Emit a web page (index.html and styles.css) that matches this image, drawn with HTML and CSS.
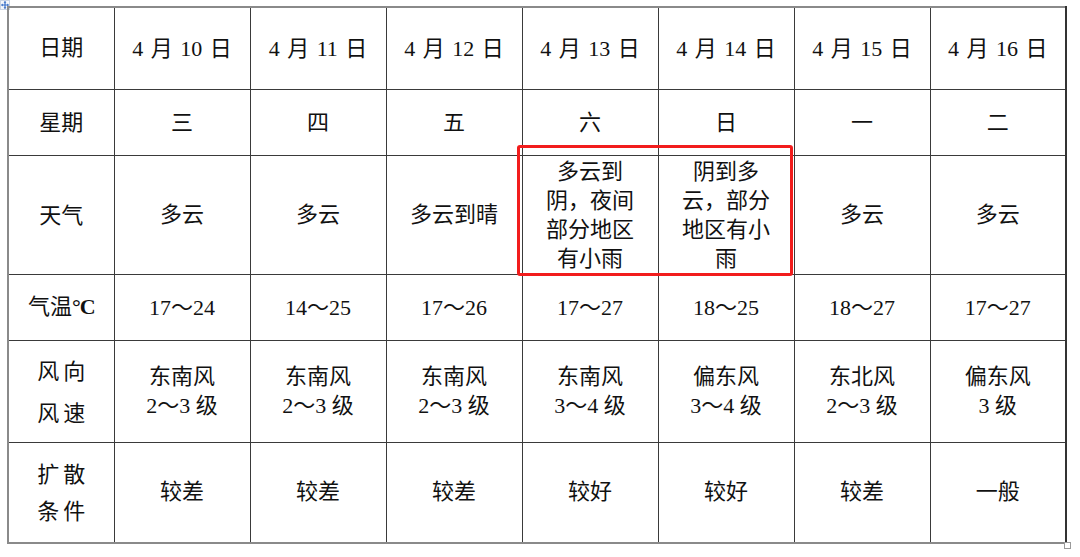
FILE: index.html
```html
<!DOCTYPE html>
<html lang="zh-CN">
<head>
<meta charset="utf-8">
<title>天气预报</title>
<link rel="stylesheet" href="styles.css">
</head>
<body>
<div class="page">
  <svg class="move-handle" width="10" height="10" viewBox="0 0 10 10" aria-hidden="true">
    <rect x="0.5" y="0.5" width="9" height="9" fill="#f3f6fb" stroke="#c9d3e3" stroke-width="1"/>
    <path d="M5 1.5 V8.5 M1.5 5 H8.5" stroke="#3a70c8" stroke-width="1.2"/>
    <path d="M5 1 L3.6 2.8 H6.4 Z M5 9 L3.6 7.2 H6.4 Z M1 5 L2.8 3.6 V6.4 Z M9 5 L7.2 3.6 V6.4 Z" fill="#3a70c8"/>
  </svg>
  <div class="table-wrap">
    <table class="weather">
      <colgroup>
        <col class="c-head">
        <col class="c-day"><col class="c-day"><col class="c-day"><col class="c-day"><col class="c-day"><col class="c-day"><col class="c-day">
      </colgroup>
      <tr class="r1">
        <th>日期</th>
        <td>4 月 10 日</td><td>4 月 11 日</td><td>4 月 12 日</td><td>4 月 13 日</td><td>4 月 14 日</td><td>4 月 15 日</td><td>4 月 16 日</td>
      </tr>
      <tr class="r2">
        <th>星期</th>
        <td>三</td><td>四</td><td>五</td><td>六</td><td>日</td><td>一</td><td>二</td>
      </tr>
      <tr class="r3">
        <th>天气</th>
        <td>多云</td><td>多云</td><td>多云到晴</td>
        <td class="multi">多云到<br>阴，夜间<br>部分地区<br>有小雨</td>
        <td class="multi">阴到多<br>云，部分<br>地区有小<br>雨</td>
        <td>多云</td><td>多云</td>
      </tr>
      <tr class="r4">
        <th>气温<span class="deg">°C</span></th>
        <td>17～24</td><td>14～25</td><td>17～26</td><td>17～27</td><td>18～25</td><td>18～27</td><td>17～27</td>
      </tr>
      <tr class="r5">
        <th class="two wind">风向<br>风速</th>
        <td class="multi">东南风<br>2～3 级</td>
        <td class="multi">东南风<br>2～3 级</td>
        <td class="multi">东南风<br>2～3 级</td>
        <td class="multi">东南风<br>3～4 级</td>
        <td class="multi">偏东风<br>3～4 级</td>
        <td class="multi">东北风<br>2～3 级</td>
        <td class="multi">偏东风<br>3 级</td>
      </tr>
      <tr class="r6">
        <th class="two spread">扩散<br>条件</th>
        <td>较差</td><td>较差</td><td>较差</td><td>较好</td><td>较好</td><td>较差</td><td>一般</td>
      </tr>
    </table>
    <div class="highlight"></div>
    <div class="resize-handle"></div>
  </div>
</div>
</body>
</html>
```

FILE: styles.css
```css
html, body {
  margin: 0;
  padding: 0;
  background: #ffffff;
}

.page {
  position: relative;
  width: 1080px;
  height: 557px;
  overflow: hidden;
  font-family: "Liberation Serif", "Noto Sans CJK SC", serif;
  color: #111;
}

.move-handle {
  position: absolute;
  left: 0;
  top: 0;
}

.table-wrap {
  position: relative;
  margin-left: 7px;
  padding-top: 6px;
  width: 1058px;
}

.weather {
  border-collapse: collapse;
  table-layout: fixed;
  width: 1058px;
  border: 2px solid #8a8a8a;
  border-right-color: #333;
}

.c-head { width: 106px; }
.c-day { width: 136px; }

.weather th,
.weather td {
  border: 1px solid #3a3a3a;
  padding: 0;
  text-align: center;
  vertical-align: middle;
  font-size: 22px;
  font-weight: normal;
  line-height: 30px;
  white-space: nowrap;
}

.r1 { height: 82px; }
.r2 { height: 66px; }
.r3 { height: 119px; }
.r4 { height: 66px; }
.r5 { height: 102px; }
.r6 { height: 101px; }

.weather .r1 td {
  padding-top: 2px;
  word-spacing: 2px;
}

.weather .r2 td,
.weather .r4 td { padding-top: 2px; }

.weather .r1 th { padding-top: 0; }
.weather .r2 th { padding-top: 2px; }

.weather .r3 th { padding-top: 2px; }
.weather .r3 td { padding-top: 0; }

.weather .multi {
  line-height: 29px;
  padding-top: 0;
}

.weather .r5 .multi {
  padding-top: 0;
}

.weather .two {
  letter-spacing: 4px;
  padding-left: 4px;
}

.weather .wind { line-height: 42px; padding-top: 4px; }
.weather .spread { line-height: 37px; padding-top: 2px; }

.deg {
  font-family: "Liberation Serif", serif;
  font-weight: bold;
  letter-spacing: -1px;
}

.highlight {
  position: absolute;
  left: 510px;
  top: 145px;
  width: 270px;
  height: 125px;
  border: 3px solid #f21c1c;
  border-radius: 3px;
  pointer-events: none;
}

.resize-handle {
  position: absolute;
  left: 1057px;
  top: 542px;
  width: 5px;
  height: 5px;
  border: 1px solid #9a9a9a;
  background: #fff;
}
```
